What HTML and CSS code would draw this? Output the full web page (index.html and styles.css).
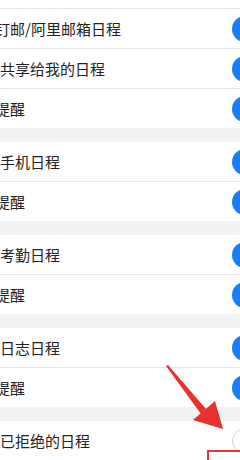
FILE: index.html
```html
<!DOCTYPE html>
<html lang="zh-CN">
<head>
<meta charset="utf-8">
<link rel="stylesheet" href="styles.css">
</head>
<body>
<div class="screen">
  <div class="stub"></div>
  <div class="groups">
    <section class="group">
      <div class="row"><span class="label cut">钉邮/阿里邮箱日程</span><span class="toggle on"></span></div>
      <div class="row"><span class="label">共享给我的日程</span><span class="toggle on"></span></div>
      <div class="row"><span class="label cut">提醒</span><span class="toggle on"></span></div>
    </section>
    <section class="group">
      <div class="row"><span class="label">手机日程</span><span class="toggle on"></span></div>
      <div class="row"><span class="label cut">提醒</span><span class="toggle on"></span></div>
    </section>
    <section class="group">
      <div class="row"><span class="label">考勤日程</span><span class="toggle on"></span></div>
      <div class="row"><span class="label cut">提醒</span><span class="toggle on"></span></div>
    </section>
    <section class="group">
      <div class="row"><span class="label">日志日程</span><span class="toggle on"></span></div>
      <div class="row"><span class="label cut">提醒</span><span class="toggle on"></span></div>
    </section>
    <section class="group">
      <div class="row"><span class="label">已拒绝的日程</span><span class="toggle off"></span></div>
    </section>
  </div>
  <svg class="arrow" width="240" height="460" viewBox="0 0 240 460">
    <polygon points="166,366 168,365 206,409 201,414" fill="#e8302c"/>
    <polygon points="193,420 215,401 223,429" fill="#e8302c"/>
  </svg>
  <div class="highlight"></div>
</div>
</body>
</html>
```

FILE: styles.css
```css
html, body {
  margin: 0;
  padding: 0;
}
body {
  width: 240px;
  height: 460px;
  overflow: hidden;
  background: #f2f3f5;
  font-family: "Noto Sans CJK SC", "Noto Sans", sans-serif;
}
.screen {
  position: relative;
  width: 240px;
  height: 460px;
  overflow: hidden;
}
.stub {
  height: 8px;
  background: #fff;
  border-bottom: 1px solid #e6e6e8;
}
.groups {
  display: flex;
  flex-direction: column;
  gap: 14px;
}
.group {
  background: #fff;
  display: flex;
  flex-direction: column;
}
.row {
  height: 39px;
  display: flex;
  align-items: center;
  justify-content: space-between;
}
.row + .row {
  border-top: 1px solid #e6e6e8;
}
.label {
  font-size: 15px;
  color: #222;
  white-space: nowrap;
  line-height: 20px;
}
.label.cut {
  margin-left: -5px;
}
.toggle {
  flex-shrink: 0;
  width: 44px;
  height: 26px;
  border-radius: 13px;
  margin-right: -36px;
  box-sizing: border-box;
}
.toggle.on {
  background: #1a7ef2;
}
.toggle.off {
  background: #fff;
  border: 1px solid #d6d6d8;
}
.arrow {
  position: absolute;
  left: 0;
  top: 0;
}
.highlight {
  position: absolute;
  left: 207px;
  top: 450px;
  width: 60px;
  height: 40px;
  border: 2px solid #e0383a;
}
```
